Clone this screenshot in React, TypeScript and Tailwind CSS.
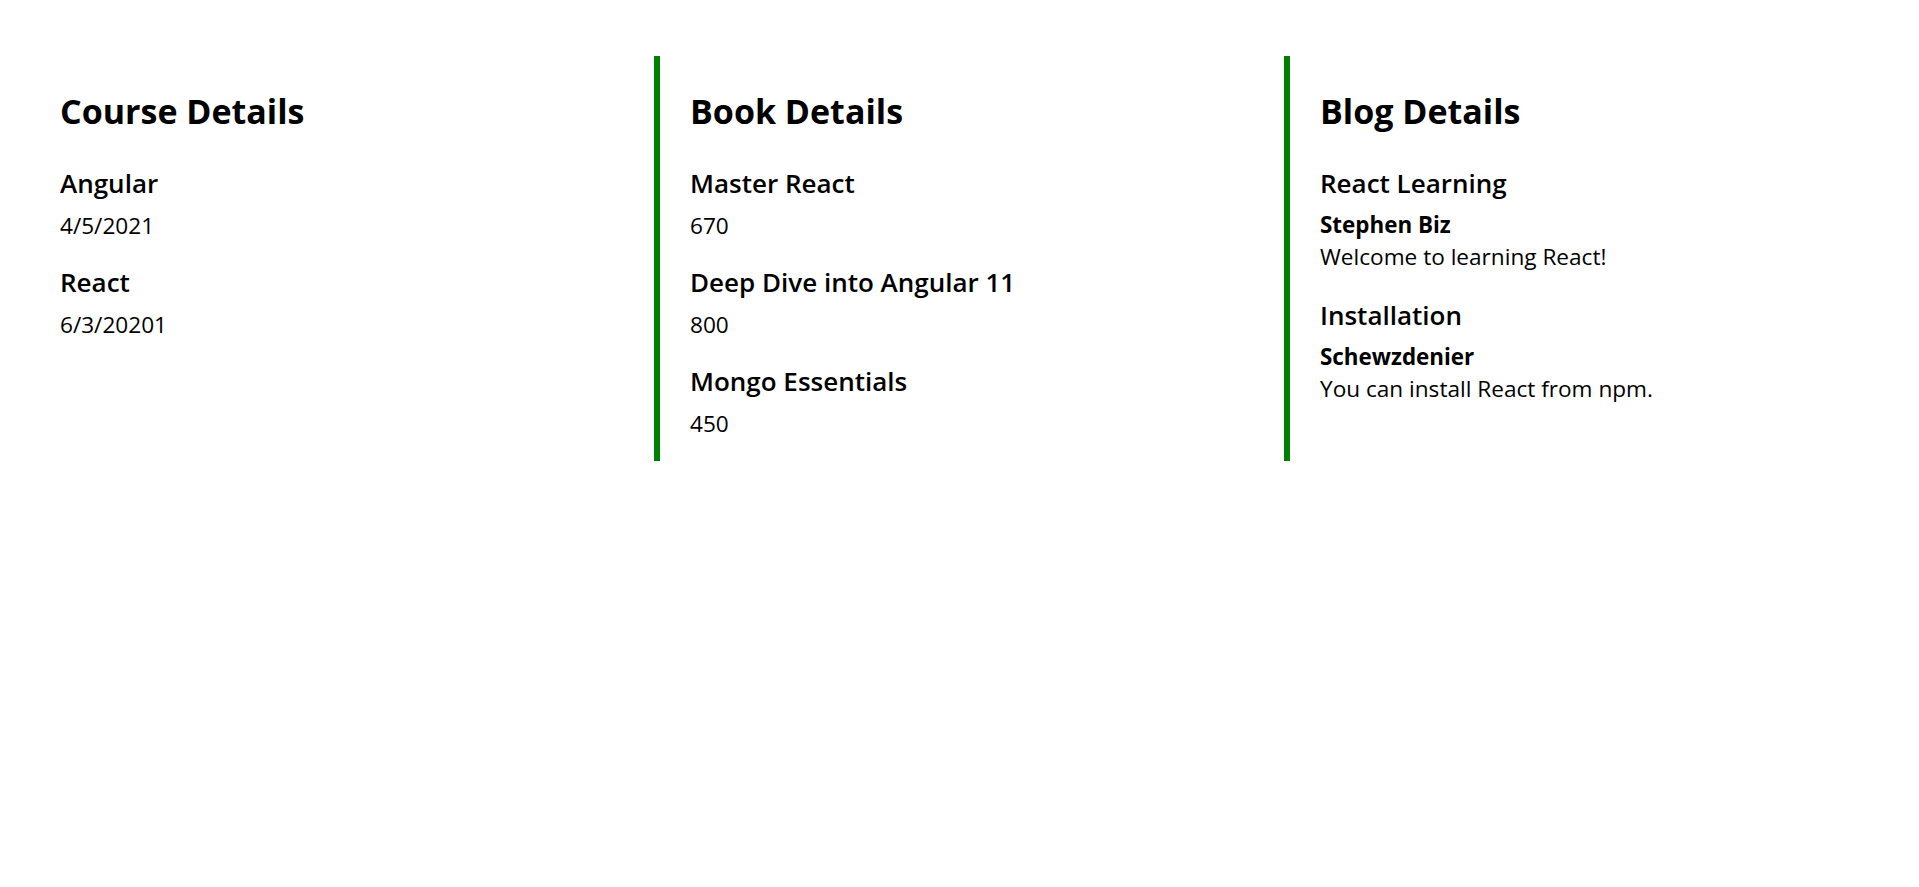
const courses = [
  { name: "Angular", date: "4/5/2021" },
  { name: "React", date: "6/3/20201" },
];

const books = [
  { name: "Master React", price: 670 },
  { name: "Deep Dive into Angular 11", price: 800 },
  { name: "Mongo Essentials", price: 450 },
];

const blogs = [
  { title: "React Learning", author: "Stephen Biz", body: "Welcome to learning React!" },
  { title: "Installation", author: "Schewzdenier", body: "You can install React from npm." },
];

export default function App() {
  return (
    <div className="min-h-screen bg-white font-['Open_Sans',sans-serif] text-black">
      <div className="grid grid-cols-[630px_630px_630px] pl-[24px] pt-[56px]">
        {/* Courses */}
        <div className="border-l-[6px] border-transparent pt-[34px] pb-[21px] pl-[30px]">
          <h2 className="text-[34px] leading-[43px] font-bold">Course Details</h2>
          <div className="mt-[34px] flex flex-col gap-[24px]">
            {courses.map((c) => (
              <div key={c.name} className="flex flex-col gap-[11px]">
                <h4 className="text-[26px] leading-[32px] font-semibold">{c.name}</h4>
                <p className="text-[22.6px] leading-[32px]">{c.date}</p>
              </div>
            ))}
          </div>
        </div>

        {/* Books */}
        <div className="border-l-[6px] border-[#008000] pt-[34px] pb-[21px] pl-[30px]">
          <h2 className="text-[34px] leading-[43px] font-bold">Book Details</h2>
          <div className="mt-[34px] flex flex-col gap-[24px]">
            {books.map((b) => (
              <div key={b.name} className="flex flex-col gap-[11px]">
                <h4 className="text-[26px] leading-[32px] font-semibold">{b.name}</h4>
                <p className="text-[22.6px] leading-[32px]">{b.price}</p>
              </div>
            ))}
          </div>
        </div>

        {/* Blogs */}
        <div className="border-l-[6px] border-[#008000] pt-[34px] pb-[21px] pl-[30px]">
          <h2 className="text-[34px] leading-[43px] font-bold">Blog Details</h2>
          <div className="mt-[34px] flex flex-col gap-[26px]">
            {blogs.map((b) => (
              <div key={b.title} className="flex flex-col">
                <h4 className="text-[26px] leading-[32px] font-semibold">{b.title}</h4>
                <p className="mt-[9px] text-[22.4px] leading-[33px] font-bold">{b.author}</p>
                <p className="text-[22.6px] leading-[32px]">{b.body}</p>
              </div>
            ))}
          </div>
        </div>
      </div>
    </div>
  );
}
